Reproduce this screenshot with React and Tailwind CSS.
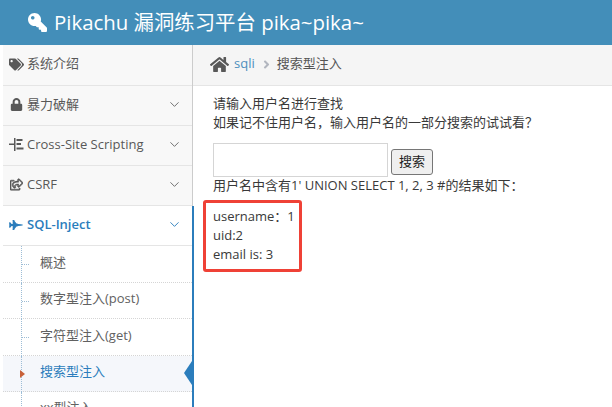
import React from "react";
import { FaKey, FaTags, FaLock, FaRegShareSquare, FaFighterJet, FaHome, FaAngleRight } from "react-icons/fa";
import { ChevronDown } from "lucide-react";

const font = { fontFamily: '"Open Sans","Noto Sans CJK SC",sans-serif' };

function XssIcon() {
  return (
    <svg width="15" height="13" viewBox="0 0 15 13" className="text-[#585858]" fill="currentColor">
      <rect x="5" y="0" width="1.5" height="13" />
      <rect x="0" y="5.5" width="5" height="1.5" />
      <rect x="7.5" y="1" width="6" height="2" />
      <rect x="7.5" y="5" width="4.5" height="2" />
      <rect x="7.5" y="9.5" width="7" height="2" />
    </svg>
  );
}

function Top({ icon, label, chevron = true, active = false, h = "h-[40px]" }) {
  return (
    <div className={`${h} flex items-center border-b border-[#e5e5e5] pl-[6px] pr-[10px] pb-[2px] text-[13px] ${active ? "bg-white text-[#2b7dbc] font-semibold" : "bg-[#f8f8f8] text-[#585858]"}`}>
      <span className="w-[18px] shrink-0 flex items-center">{icon}</span>
      <span className="flex-1 whitespace-nowrap">{label}</span>
      {chevron && <ChevronDown size={15} strokeWidth={1.5} className={active ? "text-[#2b7dbc]" : "text-[#666]"} />}
    </div>
  );
}

function Sub({ label, active = false, h }) {
  return (
    <div className={`${h} relative flex items-center pl-[37px] pb-[3px] border-b border-dotted border-[#d5d5d5] text-[13px] whitespace-nowrap ${active ? "bg-[#f5f7fb] text-[#2b7dbc]" : "bg-white text-[#616161]"}`}>
      <span className="absolute left-[18px] top-0 bottom-[-1px] border-l border-dotted border-[#9dbdd6]" />
      {active ? (
        <span className="absolute left-[17px] top-1/2 -mt-[4px] w-0 h-0 border-y-[4px] border-y-transparent border-l-[5px] border-l-[#c86139]" />
      ) : (
        <span className="absolute left-[19px] top-1/2 w-[7px] border-t border-dotted border-[#9dbdd6]" />
      )}
      {label}
      {active && (
        <span className="absolute right-0 top-1/2 -mt-[13px] w-0 h-0 border-y-[12px] border-y-transparent border-r-[8px] border-r-[#2b7dbc]" />
      )}
    </div>
  );
}

export default function App() {
  return (
    <div className="w-[612px] h-[407px] overflow-hidden bg-white flex flex-col" style={font}>
      <header className="h-[45px] shrink-0 bg-[#438eb9] flex items-center pl-[28px] pb-[1px] text-white text-[20.4px] gap-[7px] whitespace-nowrap">
        <FaKey className="text-[19px] -scale-x-100" />
        <span>Pikachu 漏洞练习平台 pika~pika~</span>
      </header>
      <div className="flex flex-1 min-h-0">
        <aside className="w-[190px] ml-[3px] shrink-0 flex flex-col relative z-10">
          <div className="w-[190px] border-r border-[#cccccc] flex flex-col bg-[#f8f8f8]">
            <Top h="h-[41px]" chevron={false} icon={<FaTags className="text-[15px] text-[#585858]" />} label="系统介绍" />
            <Top icon={<FaLock className="text-[13px] text-[#585858] ml-[1px]" />} label="暴力破解" />
            <Top icon={<XssIcon />} label="Cross-Site Scripting" />
            <Top icon={<FaRegShareSquare stroke="currentColor" strokeWidth={24} className="text-[13px] text-[#585858] ml-[1px]" />} label="CSRF" />
          </div>
          <div className="w-[191px] flex-1 border-r-2 border-[#2b7dbc] bg-white flex flex-col">
            <Top active icon={<FaFighterJet className="text-[14px] text-[#2b7dbc]" />} label="SQL-Inject" />
            <Sub h="h-[37px]" label="概述" />
            <Sub h="h-[36px]" label="数字型注入(post)" />
            <Sub h="h-[37px]" label="字符型注入(get)" />
            <Sub h="h-[36px]" active label="搜索型注入" />
            <Sub h="h-[36px]" label="xx型注入" />
          </div>
        </aside>
        <main className="flex-1 min-w-0 text-[13px] text-[#393939]">
          <div className="h-[41px] bg-[#f5f5f5] border-b border-[#e5e5e5] flex items-center pl-[17px] pb-[2px] whitespace-nowrap">
            <FaHome className="text-[19px] text-[#585858] mr-[5px]" />
            <span className="text-[#4c8fbd]">sqli</span>
            <FaAngleRight className="text-[13px] text-[#b2b6bf] ml-[5px] mr-[4px]" />
            <span className="text-[#555]">搜索型注入</span>
          </div>
          <div className="pl-[20px] pt-[8px]">
            <p className="leading-[19px] whitespace-nowrap">请输入用户名进行查找</p>
            <p className="leading-[19px] whitespace-nowrap">如果记不住用户名，输入用户名的一部分搜索的试试看？</p>
            <div className="mt-[11px] flex items-end h-[34px]">
              <input className="w-[175px] h-[34px] border border-[#d5d5d5] bg-white" />
              <button className="ml-[3px] mb-[2px] w-[42px] h-[26px] rounded-[3px] border border-[#767676] bg-[#efefef] text-[13px] text-[#222]">搜索</button>
            </div>
            <p className="leading-[19px] whitespace-nowrap mt-[-1px]">用户名中含有1' UNION SELECT 1, 2, 3 #的结果如下：</p>
            <div className="ml-[-10px] mt-[5px] w-[99px] h-[72px] border-[3px] border-[#ef4136] rounded-[3px] pl-[7px] pt-[4px] text-[#393939]">
              <p className="leading-[19px] whitespace-nowrap">username：1</p>
              <p className="leading-[19px]">uid:2</p>
              <p className="leading-[19px] whitespace-nowrap">email is: 3</p>
            </div>
          </div>
        </main>
      </div>
    </div>
  );
}
